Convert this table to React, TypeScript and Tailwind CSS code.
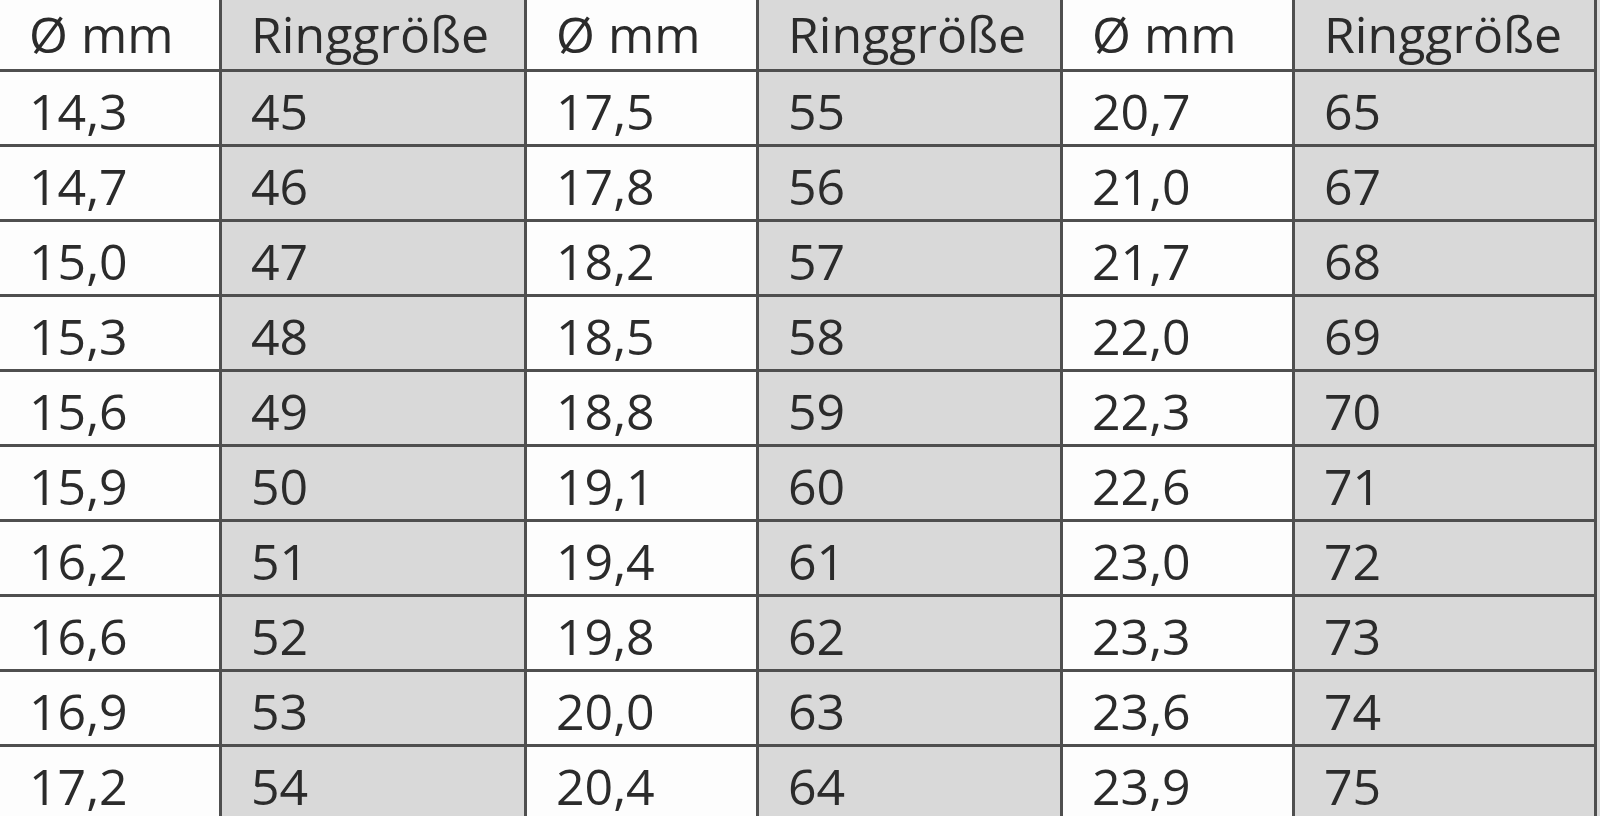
import React from "react";

const cols: string[][] = [
  ["14,3", "14,7", "15,0", "15,3", "15,6", "15,9", "16,2", "16,6", "16,9", "17,2"],
  ["45", "46", "47", "48", "49", "50", "51", "52", "53", "54"],
  ["17,5", "17,8", "18,2", "18,5", "18,8", "19,1", "19,4", "19,8", "20,0", "20,4"],
  ["55", "56", "57", "58", "59", "60", "61", "62", "63", "64"],
  ["20,7", "21,0", "21,7", "22,0", "22,3", "22,6", "23,0", "23,3", "23,6", "23,9"],
  ["65", "67", "68", "69", "70", "71", "72", "73", "74", "75"],
];

const headers = ["Ø mm", "Ringgröße", "Ø mm", "Ringgröße", "Ø mm", "Ringgröße"];

export default function App() {
  const rows = Array.from({ length: 10 }, (_, r) => cols.map((c) => c[r]));
  return (
    <div
      className="w-[1600px] h-[816px] overflow-hidden bg-[#dcdcdc] flex"
      style={{ fontFamily: '"Open Sans", "Noto Sans", sans-serif' }}
    >
      <div className="w-[1597px] h-[816px] shrink-0 bg-[#4f4f4f] grid grid-cols-[219px_302px_229px_301px_229px_299px] gap-[3px] pr-[3px] grid-rows-[69px_repeat(9,72px)_69px] content-start">
        {headers.map((h, i) => (
          <div
            key={"h" + i}
            className={`${i % 2 === 0 ? "bg-[#fdfdfd]" : "bg-[#d9d9d9]"} pl-[29px] pt-[9px] text-[50px] leading-[50px] font-medium text-[#2b2b2b]`}
          >
            {h}
          </div>
        ))}
        {rows.map((row, r) =>
          row.map((v, i) => (
            <div
              key={r + "-" + i}
              className={`${i % 2 === 0 ? "bg-[#fdfdfd]" : "bg-[#d9d9d9]"} pl-[29px] pt-[14px] text-[50px] leading-[50px] font-medium text-[#2b2b2b]`}
            >
              {v}
            </div>
          ))
        )}
      </div>
    </div>
  );
}
